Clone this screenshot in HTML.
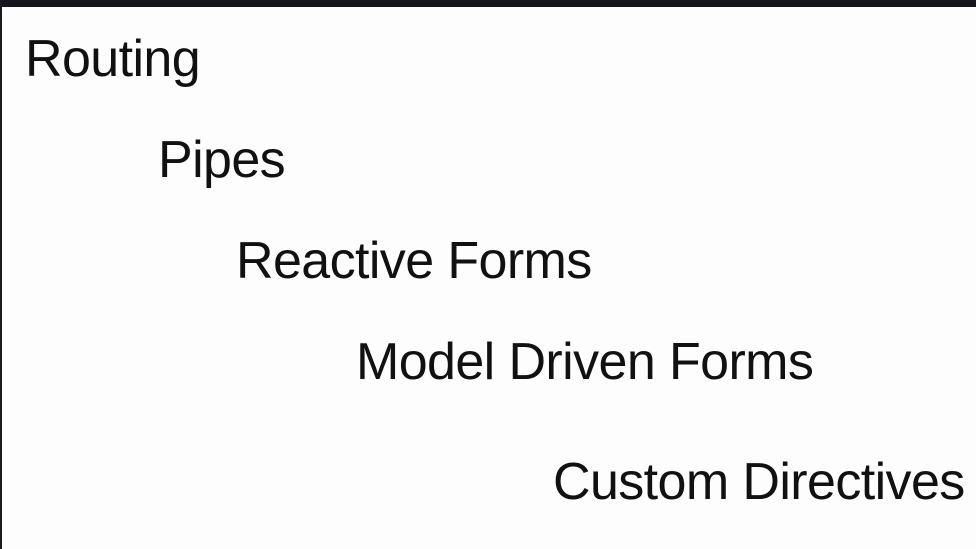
<!DOCTYPE html>
<html><head><meta charset="utf-8"><style>
html,body{margin:0;padding:0}
body{width:976px;height:549px;background:#fdfdfd;position:relative;overflow:hidden;font-family:"Liberation Sans",sans-serif}
.top{position:absolute;left:0;top:0;width:976px;height:7px;background:#16161c}
.left{position:absolute;left:0;top:0;width:2px;height:549px;background:#1a1a20}
.t{position:absolute;font-size:52px;line-height:52px;color:#111;letter-spacing:-0.6px;white-space:nowrap}
</style></head><body>
<div class="top"></div><div class="left"></div>
<div class="t" style="left:25px;top:33px">Routing</div>
<div class="t" style="left:158px;top:134px">Pipes</div>
<div class="t" style="left:236px;top:235px">Reactive Forms</div>
<div class="t" style="left:356px;top:336px">Model Driven Forms</div>
<div class="t" style="left:553px;top:456px">Custom Directives</div>
</body></html>
